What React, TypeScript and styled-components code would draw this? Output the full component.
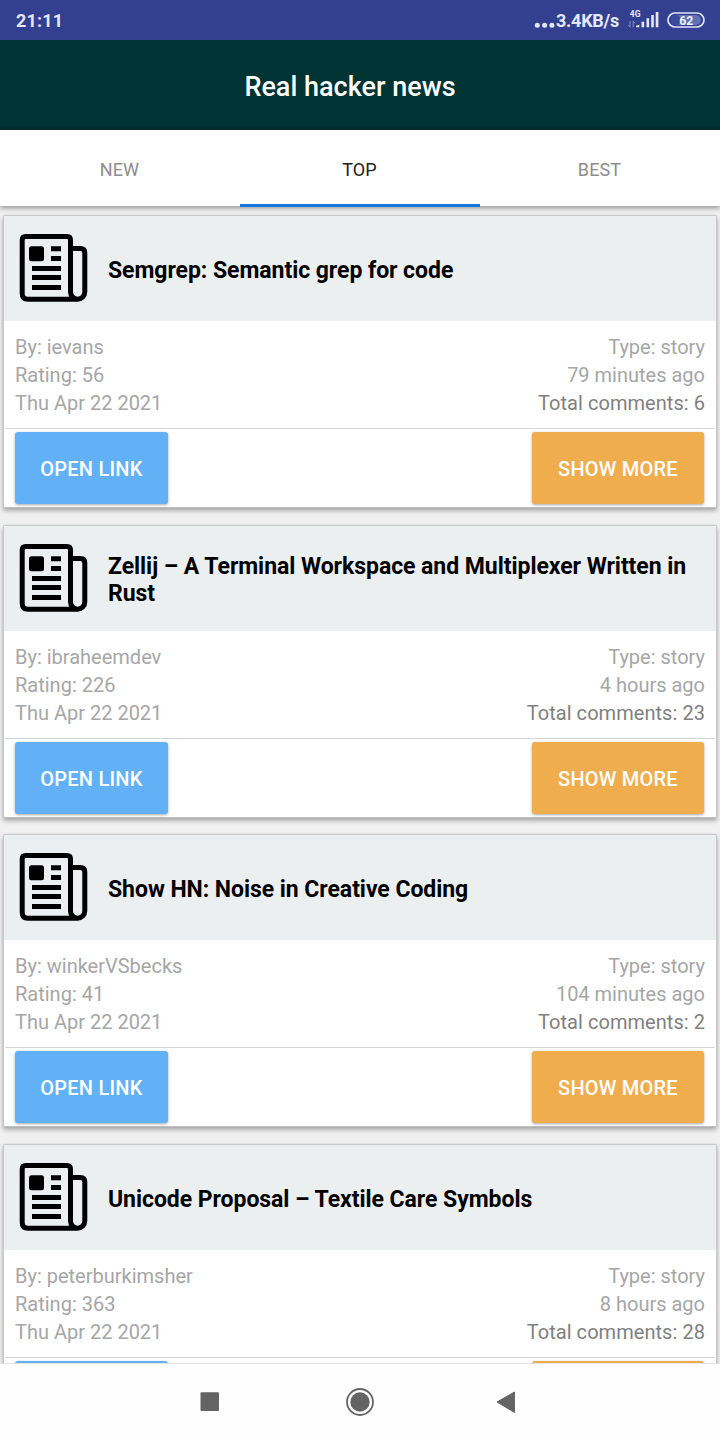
import React from "react";
import styled, { createGlobalStyle } from "styled-components";

const GlobalStyle = createGlobalStyle`
  * { box-sizing: border-box; }
  body { margin: 0; background: #f0f0f0; font-family: Roboto, "Liberation Sans", sans-serif; }
`;

const Screen = styled.div`
  width: 720px;
  height: 1440px;
  overflow: hidden;
  display: flex;
  flex-direction: column;
  background: #f0f0f0;
`;

const StatusBar = styled.div`
  flex: none;
  height: 40px;
  padding: 0 15px 0 16px;
  display: flex;
  align-items: center;
  background: #334090;
  color: #e4e8fa;
  font-size: 18px;
  font-weight: 700;
`;

const Clock = styled.span`
  flex: 1;
  letter-spacing: 0.2px;
`;

const Speed = styled.span`
  display: flex;
  align-items: center;
  gap: 1px;
  margin-right: 8px;
  letter-spacing: -0.25px;
`;

const Icon = styled.svg`
  display: block;
  flex: none;
`;

const BatteryIcon = styled(Icon)`
  margin-left: 7px;
`;

const AppBar = styled.header`
  flex: none;
  height: 90px;
  padding: 3px 20px 0 0;
  display: flex;
  align-items: center;
  justify-content: center;
  background: linear-gradient(#003333 0 86px, #002b2b 90px);
  color: #fff;
  font-size: 27px;
  font-weight: 500;
`;

const Tabs = styled.nav`
  flex: none;
  position: relative;
  z-index: 1;
  height: 76px;
  display: flex;
  background: #fff;
  box-shadow: 0 2px 5px rgba(0, 0, 0, 0.4);
`;

const Tab = styled.div<{ $active?: boolean }>`
  flex: 1;
  height: 77px;
  padding: 5px 1px 0 0;
  display: flex;
  align-items: center;
  justify-content: center;
  border-bottom: 3px solid ${(p) => (p.$active ? "#1976dc" : "transparent")};
  color: ${(p) => (p.$active ? "#222" : "#8c8c8c")};
  font-size: 18px;
  letter-spacing: 0.1px;
`;

const Feed = styled.main`
  flex: 1;
  min-height: 0;
  overflow: hidden;
  padding: 9px 3px 0;
`;

const Card = styled.article<{ $gap: number }>`
  height: 293px;
  margin-bottom: ${(p) => p.$gap}px;
  border: 1px solid #c9c9c9;
  border-bottom-color: #c2c2c2;
  border-radius: 2px;
  background: #fff;
  box-shadow: 0 3px 4px rgba(0, 0, 0, 0.28), 0 0 2px rgba(0, 0, 0, 0.12);
`;

const CardHeader = styled.div`
  height: 105px;
  padding: 0 16px 0 15px;
  display: flex;
  align-items: center;
  gap: 19px;
  background: #ebeff0;
`;

const Title = styled.h2`
  margin: 0;
  padding-top: 3px;
  color: #000;
  font-size: 23px;
  font-weight: 700;
  line-height: 27px;
  letter-spacing: -0.05px;
`;

const Details = styled.div`
  height: 108px;
  margin: 0 1px;
  padding: 12px 10px 0;
  display: flex;
  justify-content: space-between;
  border-bottom: 1px solid #d6d6d6;
  font-size: 20px;
  line-height: 28px;
  color: #a6a6a6;
`;

const DetailColumn = styled.div<{ $end?: boolean }>`
  text-align: ${(p) => (p.$end ? "right" : "left")};
`;

const Comments = styled.div`
  color: #808080;
  letter-spacing: 0.05px;
`;

const Actions = styled.div`
  padding: 3px 12px 0 11px;
  display: flex;
  justify-content: space-between;
`;

const ActionButton = styled.button<{ $color: string; $width: number }>`
  width: ${(p) => p.$width}px;
  height: 72px;
  padding: 2px 0 0;
  border: 0;
  border-radius: 3px;
  background: ${(p) => p.$color};
  box-shadow: 0 1px 3px rgba(0, 0, 0, 0.35);
  color: #fff;
  font-family: inherit;
  font-size: 20px;
  font-weight: 500;
  letter-spacing: 0.22px;
`;

const NavBar = styled.footer`
  flex: none;
  height: 77px;
  border-top: 1px solid #e4e4e4;
  background: #fefefe;
  display: flex;
  justify-content: center;
`;

function NewspaperIcon() {
  return (
    <Icon width="70" height="71" viewBox="0 0 70 71">
      <g fill="none" stroke="#000" strokeWidth="5">
        <path d="M58.6 66.200H9Q3.200 66.200 3.200 60.500V7Q3.200 3.500 6.700 3.500H48Q51.500 3.500 51.500 7V59A7.150 7.150 0 0 0 65.800 59V20Q65.800 15.500 61.300 15.500H52" />
      </g>
      <rect x="10" y="13.300" width="15" height="15" rx="2.500" />
      <path d="M32 13.300h10v5H32zM32 23h10v5H32zM13 33h29v5H13zM13 42h29v5H13zM13 52h29v5H13z" />
    </Icon>
  );
}

function SignalIcon() {
  return (
    <Icon width="33" height="24" viewBox="0 0 33 24" fill="#e4e8fa">
      <text x="2.800" y="9.300" fontSize="8.500" fontWeight="700" letterSpacing="0">4G</text>
      <path d="M3 13v6M1.500 17.200l1.500 2M6.200 19.300v-6M7.700 15l-1.500-2" stroke="#8690c8" strokeWidth="1" fill="none" />
      <path d="M9 19.300v-1.500l3.300-1v2.500zM14.500 13.700h2.700v5.600h-2.700zM19.500 10.200h2.600v9.100h-2.600zM24.200 7h2.600v12.300h-2.600zM28.700 4h2.700v15.300h-2.700z" />
    </Icon>
  );
}

const stories = [
  { title: "Semgrep: Semantic grep for code", by: "ievans", rating: 56, age: "79 minutes ago", comments: 6, gap: 17 },
  { title: "Zellij – A Terminal Workspace and Multiplexer Written in Rust", by: "ibraheemdev", rating: 226, age: "4 hours ago", comments: 23, gap: 16 },
  { title: "Show HN: Noise in Creative Coding", by: "winkerVSbecks", rating: 41, age: "104 minutes ago", comments: 2, gap: 17 },
  { title: "Unicode Proposal – Textile Care Symbols", by: "peterburkimsher", rating: 363, age: "8 hours ago", comments: 28, gap: 17 },
];

export default function App() {
  return (
    <>
      <GlobalStyle />
      <Screen>
        <StatusBar>
          <Clock>21:11</Clock>
          <Speed>
            <Icon width="21" height="20" viewBox="0 0 21 20" fill="#e4e8fa">
              <circle cx="3.300" cy="15.200" r="2.500" />
              <circle cx="10.600" cy="15.200" r="2.500" />
              <circle cx="17.900" cy="15.200" r="2.500" />
            </Icon>
            3.4KB/s
          </Speed>
          <SignalIcon />
          <BatteryIcon width="38" height="16" viewBox="0 0 38 16">
            <rect x="4" y="3" width="30" height="10" rx="5" fill="#6470b2" />
            <rect x="4" y="3" width="9" height="10" rx="4" fill="#3c489a" />
            <rect x="1" y="1" width="36" height="14" rx="7" fill="none" stroke="#dfe3f8" strokeWidth="1.700" />
            <text x="12.300" y="13" fontSize="13.500" fontWeight="700" fill="#eef0fc" textLength="14" lengthAdjust="spacingAndGlyphs">62</text>
          </BatteryIcon>
        </StatusBar>
        <AppBar>Real hacker news</AppBar>
        <Tabs>
          <Tab>NEW</Tab>
          <Tab $active>TOP</Tab>
          <Tab>BEST</Tab>
        </Tabs>
        <Feed>
          {stories.map((s) => (
            <Card key={s.title} $gap={s.gap}>
              <CardHeader>
                <NewspaperIcon />
                <Title>{s.title}</Title>
              </CardHeader>
              <Details>
                <DetailColumn>
                  <div>By: {s.by}</div>
                  <div>Rating: {s.rating}</div>
                  <div>Thu Apr 22 2021</div>
                </DetailColumn>
                <DetailColumn $end>
                  <div>Type: story</div>
                  <div>{s.age}</div>
                  <Comments>Total comments: {s.comments}</Comments>
                </DetailColumn>
              </Details>
              <Actions>
                <ActionButton $color="#62b1f6" $width={153}>OPEN LINK</ActionButton>
                <ActionButton $color="#f0ad4e" $width={172}>SHOW MORE</ActionButton>
              </Actions>
            </Card>
          ))}
        </Feed>
        <NavBar>
          <Icon width="720" height="76" viewBox="0 0 720 76" fill="#646464">
            <rect x="200.500" y="28.300" width="18.500" height="18.700" rx="1" />
            <circle cx="360" cy="38" r="13" fill="none" stroke="#646464" strokeWidth="1.800" />
            <circle cx="360" cy="38" r="9.700" />
            <path d="M497 38L514.500 28V48.500Z" stroke="#646464" strokeWidth="1" strokeLinejoin="round" />
          </Icon>
        </NavBar>
      </Screen>
    </>
  );
}
